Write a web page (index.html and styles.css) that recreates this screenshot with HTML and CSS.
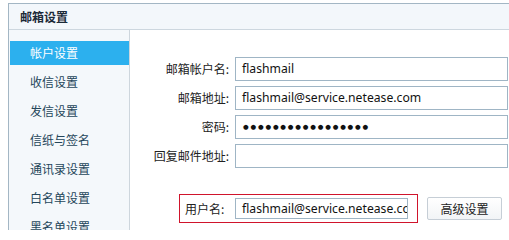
FILE: index.html
```html
<!DOCTYPE html>
<html>
<head>
<meta charset="utf-8">
<link rel="stylesheet" href="styles.css">
</head>
<body>
<div class="panel">
  <div class="header">邮箱设置</div>
  <div class="body">
    <ul class="side">
      <li class="item active">帐户设置</li>
      <li class="item">收信设置</li>
      <li class="item">发信设置</li>
      <li class="item">信纸与签名</li>
      <li class="item">通讯录设置</li>
      <li class="item">白名单设置</li>
      <li class="item">黑名单设置</li>
    </ul>
    <div class="main">
      <div class="form">
        <label class="lbl">邮箱帐户名:</label><div class="field">flashmail</div>
        <label class="lbl">邮箱地址:</label><div class="field">flashmail@service.netease.com</div>
        <label class="lbl">密码:</label><div class="field dots">●●●●●●●●●●●●●●●●●</div>
        <label class="lbl">回复邮件地址:</label><div class="field"></div>
      </div>
      <div class="bottom">
        <div class="userbox">
          <label class="ulbl">用户名:</label>
          <div class="field ufield">flashmail@service.netease.com</div>
        </div>
        <button class="btn">高级设置</button>
      </div>
    </div>
  </div>
</div>
</body>
</html>
```
FILE: styles.css
```css
html, body {
  margin: 0;
  padding: 0;
  background: #fff;
  font-family: "Noto Sans CJK SC", "Noto Sans", sans-serif;
  font-size: 12px;
  color: #222;
  overflow: hidden;
}
.panel {
  margin: 3px 0 0 8px;
  width: 520px;
  border-top: 1px solid #a3b6c4;
  border-left: 1px solid #a3b6c4;
}
.header {
  height: 25px;
  line-height: 25px;
  padding-left: 11px;
  background: #f3f7fb;
  border-bottom: 1px solid #cdd7df;
  font-weight: bold;
  color: #1c2a38;
}
.body {
  display: flex;
  height: 200px;
}
.side {
  list-style: none;
  margin: 0;
  padding: 11px 0 0 1px;
  width: 119px;
  background: #f4f8fb;
  border-right: 1px solid #cdd6dd;
  display: flex;
  flex-direction: column;
  gap: 5px;
}
.item {
  height: 24px;
  line-height: 24px;
  padding-left: 20px;
  color: #24465a;
  flex: none;
}
.item.active {
  background: #2cb0ee;
  color: #fff;
}
.main {
  flex: 1;
  padding-top: 27px;
}
.form {
  display: grid;
  grid-template-columns: 99px 273px;
  column-gap: 6px;
  row-gap: 5px;
}
.lbl {
  text-align: right;
  line-height: 24px;
  color: #222;
}
.field {
  box-sizing: border-box;
  height: 24px;
  line-height: 22px;
  border: 1px solid #9fb5c5;
  padding-left: 6px;
  font-family: "Noto Sans", sans-serif;
  font-size: 12.2px;
  color: #111;
  white-space: nowrap;
  overflow: hidden;
}
.dots {
  font-family: "DejaVu Sans", sans-serif;
  font-size: 6.5px;
  letter-spacing: 1.8px;
  line-height: 22px;
  padding-left: 7px;
}
.bottom {
  display: flex;
  align-items: center;
  margin-top: 26px;
  margin-left: 49px;
  gap: 9px;
}
.userbox {
  box-sizing: border-box;
  width: 239px;
  height: 29px;
  border: 1px solid #d0142c;
  display: flex;
  align-items: center;
  padding-left: 5px;
}
.ulbl {
  width: 50px;
  flex: none;
}
.ufield {
  width: 173px;
  height: 21px;
  line-height: 19px;
  flex: none;
}
.btn {
  box-sizing: border-box;
  width: 75px;
  height: 23px;
  border: 1px solid #c6ced6;
  background: linear-gradient(#ffffff, #f2f4f6);
  border-radius: 2px;
  font-family: inherit;
  font-size: 12px;
  color: #222;
  padding: 0;
}
```
